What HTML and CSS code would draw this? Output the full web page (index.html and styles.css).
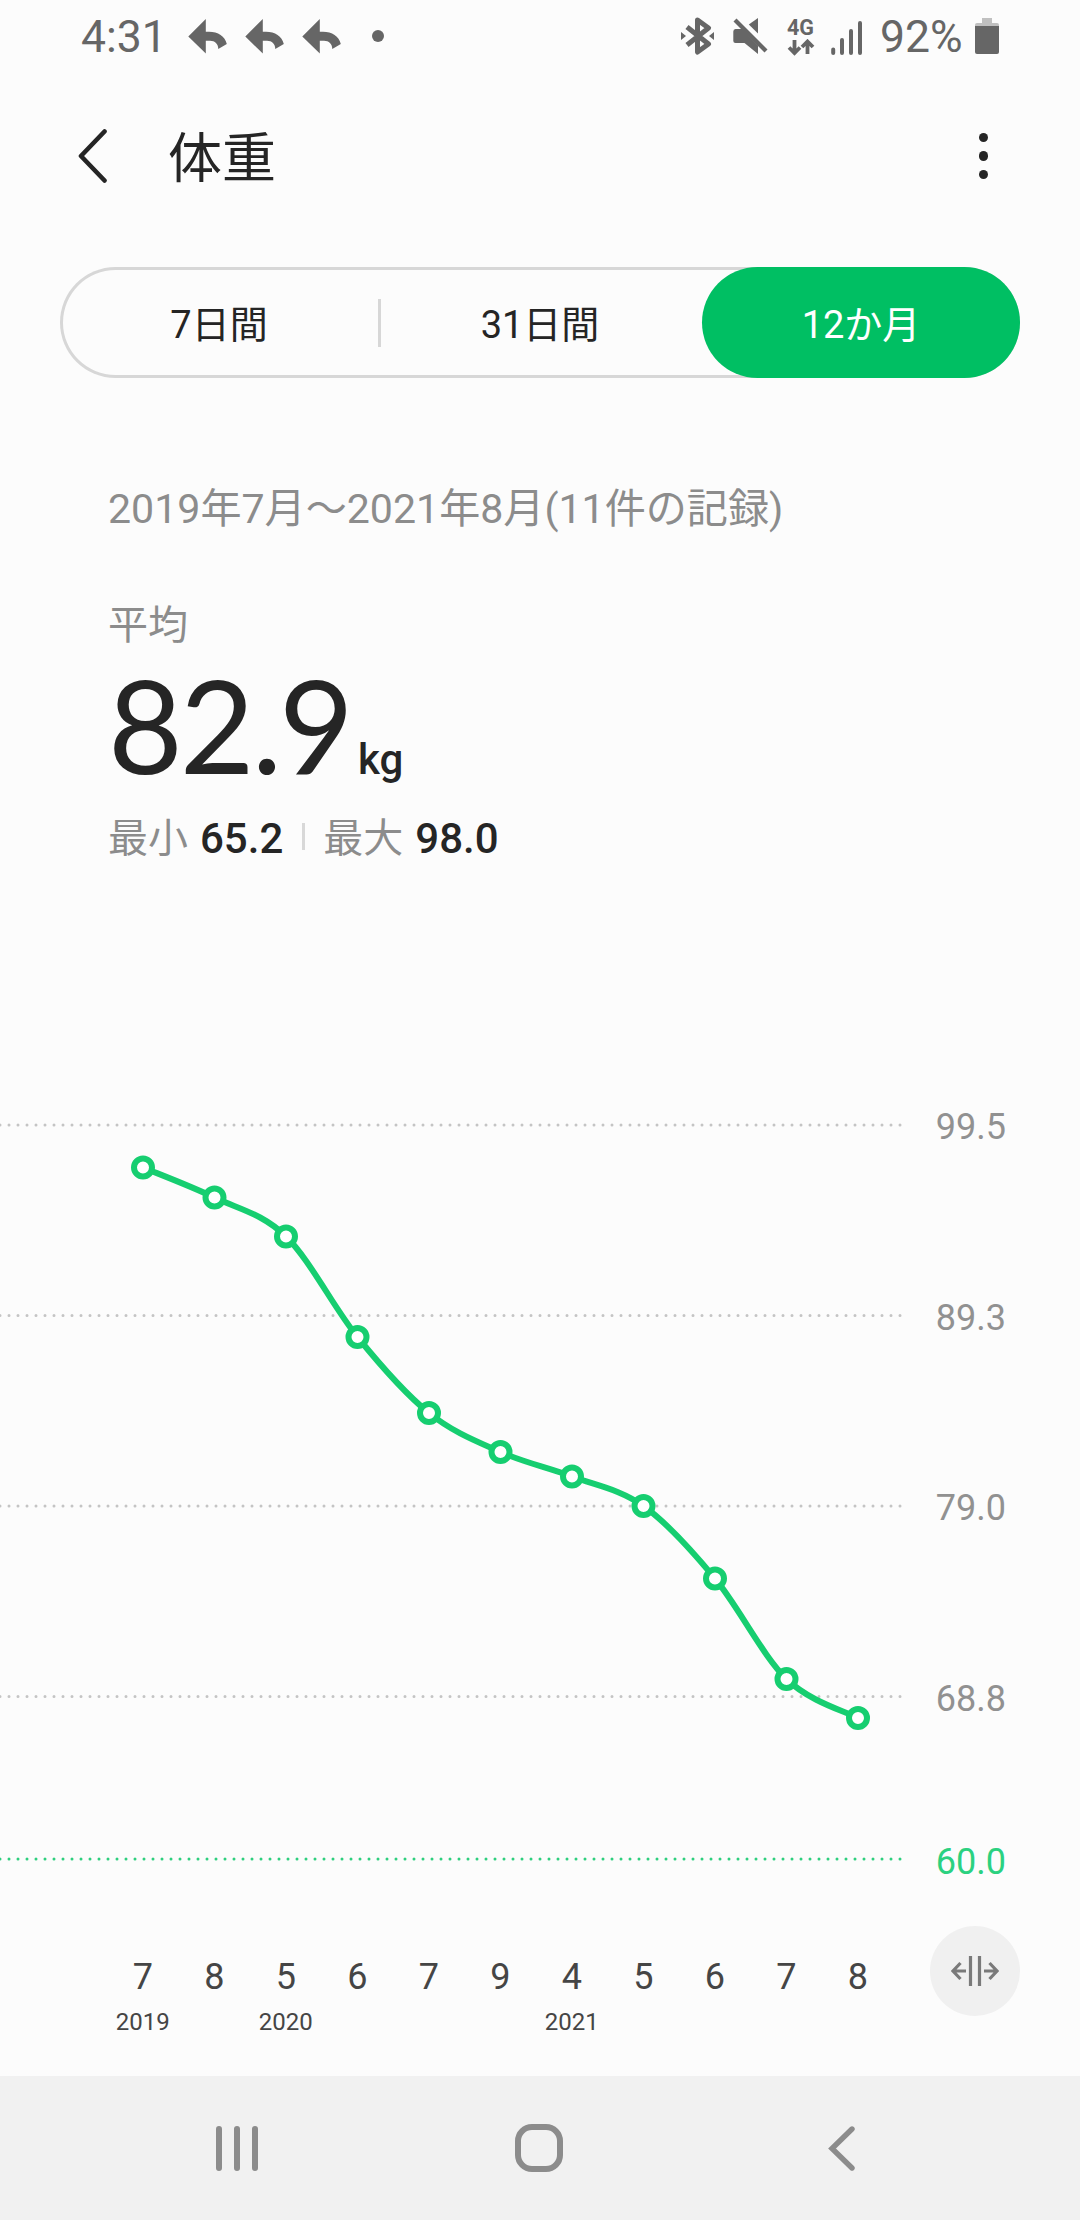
FILE: index.html
```html
<!DOCTYPE html>
<html lang="ja">
<head>
    <meta charset="UTF-8">
    <meta name="viewport" content="width=device-width, initial-scale=1.0">
    <title>体重</title>
    <link rel="stylesheet" href="styles.css">
</head>
<body>
    <div class="status-bar">
        <div class="status-left">
            <span class="clock">4:31</span>
            <svg class="reply" width="39" height="35" viewBox="0 0 39 35"><path d="M0.3 17.4 17.8 0V12.7H21C30 12.7 37 17 38.8 25L30.3 30C30.3 25 27 21.8 22 21.8H17.8V34.6Z"/></svg>
            <svg class="reply" width="39" height="35" viewBox="0 0 39 35"><path d="M0.3 17.4 17.8 0V12.7H21C30 12.7 37 17 38.8 25L30.3 30C30.3 25 27 21.8 22 21.8H17.8V34.6Z"/></svg>
            <svg class="reply" width="39" height="35" viewBox="0 0 39 35"><path d="M0.3 17.4 17.8 0V12.7H21C30 12.7 37 17 38.8 25L30.3 30C30.3 25 27 21.8 22 21.8H17.8V34.6Z"/></svg>
            <span class="more-dot"></span>
        </div>
        <div class="status-right">
            <svg class="bluetooth" width="34" height="38" viewBox="0 0 34 38">
                <path d="M6 10 27.5 27 16.5 35V3L27.5 11 6 28" fill="none" stroke="#666" stroke-width="5" stroke-linejoin="round"/>
                <path d="M0 15 5 19 0 23ZM33 15 28 19 33 23Z"/>
            </svg>
            <svg class="mute" width="35" height="36" viewBox="0 0 35 36">
                <path d="M2.5 11H9L25 27.5V36L11.5 25H2.5Q0.3 25 0.3 23V13.5Q0.3 11 2.5 11Z"/>
                <path d="M25 0V15.5L15.8 6.5Z"/>
                <path d="M2 2 33 33" stroke="#666" stroke-width="4.2"/>
            </svg>
            <div class="network">
                <span>4G</span>
                <svg width="28" height="17" viewBox="0 0 28 17"><path d="M7.5 1V14M2 8.5 7.5 14 13 8.5M20.5 15V3M15 8 20.5 2.5 26 8" fill="none" stroke="#666" stroke-width="3.8"/></svg>
            </div>
            <svg class="signal" width="32" height="34" viewBox="0 0 32 34"><path d="M2.2 28.5V32M11 19V32M20 10V32M29 2V32" stroke="#666" stroke-width="4" stroke-linecap="round"/></svg>
            <span class="percent">92%</span>
            <svg class="battery" width="24" height="36" viewBox="0 0 24 36">
                <path d="M7 0H17V5H22Q24 5 24 7V9H0V7Q0 5 2 5H7Z" fill="#c0c0c0"/>
                <path d="M0 8H24V34Q24 36 22 36H2Q0 36 0 34Z"/>
            </svg>
        </div>
    </div>

    <header class="app-bar">
        <svg class="back" width="30" height="56" viewBox="0 0 30 56"><path d="M26.5 3.5 3 28 26.5 52.5" fill="none" stroke="#252525" stroke-width="4.6" stroke-linecap="round" stroke-linejoin="round"/></svg>
        <h1>体重</h1>
        <div class="menu"><span></span><span></span><span></span></div>
    </header>

    <div class="tabs">
        <div class="tab">7日間</div>
        <div class="tab-line"></div>
        <div class="tab">31日間</div>
        <div class="tab active">12か月</div>
    </div>

    <section class="summary">
        <p class="period">2019年7月～2021年8月(11件の記録)</p>
        <p class="label">平均</p>
        <p class="average"><span class="value">82.9</span><span class="unit">kg</span></p>
        <p class="range">
            <span class="label">最小</span><b>65.2</b>
            <i class="range-line"></i>
            <span class="label">最大</span><b>98.0</b>
        </p>
    </section>

    <svg class="chart" width="1080" height="800" viewBox="0 0 1080 800">
        <g class="grid">
            <path d="M0 25H901"/>
            <path d="M0 215.4H901"/>
            <path d="M0 406H901"/>
            <path d="M0 596.5H901"/>
            <path class="goal" d="M0 759H901"/>
        </g>
        <g class="scale">
            <text x="1006" y="39">99.5</text>
            <text x="1006" y="230">89.3</text>
            <text x="1006" y="420">79.0</text>
            <text x="1006" y="611">68.8</text>
            <text class="goal" x="1006" y="774">60.0</text>
        </g>
        <path class="line" d="M143 67.5C154.9 72.5 190.7 86 214.5 97.5S262.2 113.3 286 136.5 333.7 207.6 357.5 237 405.2 293.8 429 313 476.7 341.4 500.5 352 548.2 367.5 572 376.5 619.7 389 643.5 406 691.2 449.7 715 478.5 762.7 555.8 786.5 579 846.1 611.5 858 618"/>
        <g class="points">
            <circle cx="143" cy="67.5" r="9"/>
            <circle cx="214.5" cy="97.5" r="9"/>
            <circle cx="286" cy="136.5" r="9"/>
            <circle cx="357.5" cy="237" r="9"/>
            <circle cx="429" cy="313" r="9"/>
            <circle cx="500.5" cy="352" r="9"/>
            <circle cx="572" cy="376.5" r="9"/>
            <circle cx="643.5" cy="406" r="9"/>
            <circle cx="715" cy="478.5" r="9"/>
            <circle cx="786.5" cy="579" r="9"/>
            <circle cx="858" cy="618" r="9"/>
        </g>
    </svg>

    <div class="axis">
        <div class="month">7<small>2019</small></div>
        <div class="month">8</div>
        <div class="month">5<small>2020</small></div>
        <div class="month">6</div>
        <div class="month">7</div>
        <div class="month">9</div>
        <div class="month">4<small>2021</small></div>
        <div class="month">5</div>
        <div class="month">6</div>
        <div class="month">7</div>
        <div class="month">8</div>
        <div class="spread">
            <svg width="48" height="30" viewBox="0 0 48 30"><path d="M19.5 0V30M28.5 0V30M15 15H2M9.5 7 2 15 9.5 23M33 15H46M38.5 7 46 15 38.5 23" fill="none" stroke="#7a7a7a" stroke-width="3.2"/></svg>
        </div>
    </div>

    <nav class="nav-bar">
        <svg width="42" height="45" viewBox="0 0 42 45"><path d="M3 3V42M21 3V42M39 3V42" stroke="#8c8c8c" stroke-width="6" stroke-linecap="round"/></svg>
        <svg class="home" width="48" height="48" viewBox="0 0 48 48"><rect x="3" y="3" width="42" height="42" rx="14" fill="none" stroke="#8c8c8c" stroke-width="6"/></svg>
        <svg width="27" height="45" viewBox="0 0 27 45"><path d="M24 3 4 22.5 24 42" fill="none" stroke="#8c8c8c" stroke-width="5.4" stroke-linecap="round"/></svg>
    </nav>
</body>
</html>
```
FILE: styles.css
```css
* {
    box-sizing: border-box;
}
body {
    margin: 0;
    width: 1080px;
    height: 2220px;
    display: flex;
    flex-direction: column;
    font-family: Roboto, "Noto Sans CJK JP", sans-serif;
    color: #252525;
    background-color: #fcfcfc;
}
h1, p {
    margin: 0;
    font-weight: normal;
}
svg {
    display: block;
    flex: none;
}

/* status bar */
.status-bar {
    height: 76px;
    padding: 0 81px;
    display: flex;
    justify-content: space-between;
    color: #666;
    fill: #666;
    font-size: 44.5px;
    line-height: 74px;
}
.status-left, .status-right {
    display: flex;
    align-items: center;
    height: 72px;
}
.clock {
    width: 107px;
    padding-top: 2px;
}
.reply {
    margin-right: 18px;
}
.more-dot {
    width: 12px;
    height: 12px;
    margin-left: 13px;
    border-radius: 50%;
    background-color: #666;
}
.bluetooth {
    margin-right: 18px;
}
.mute {
    margin-right: 19px;
}
.network {
    width: 28px;
    margin-right: 16px;
    font-size: 21.5px;
    font-weight: bold;
    line-height: 22px;
}
.signal {
    margin: 3px 17px 0 0;
}
.percent {
    width: 82px;
    padding-top: 2px;
    margin-right: 13px;
}

/* title row */
.app-bar {
    height: 160px;
    padding: 0 92px 0 78px;
    display: flex;
    align-items: center;
}
.app-bar h1 {
    margin-left: 60px;
    padding-top: 8px;
    font-size: 54px;
    line-height: 80px;
}
.menu {
    margin-left: auto;
    display: grid;
    gap: 9.6px;
}
.menu span {
    width: 9.2px;
    height: 9.2px;
    border-radius: 50%;
    background-color: #252525;
}

/* period tabs */
.tabs {
    width: 960px;
    height: 111px;
    margin: 31px 60px 0;
    display: flex;
    align-items: center;
    border-radius: 56px;
    box-shadow: inset 0 0 0 3px #d7d7d7;
}
.tab {
    width: 318px;
    height: 111px;
    padding-top: 3px;
    font-size: 38px;
    line-height: 111px;
    text-align: center;
}
.tab-line {
    width: 3px;
    height: 48px;
    background-color: #d7d7d7;
}
.tab.active {
    margin-left: 3px;
    border-radius: 56px;
    background-color: #00bf63;
    color: #fff;
}

/* averages */
.summary {
    height: 722px;
    padding: 106px 108px 0;
}
.period, .label {
    color: #8c8c8c;
    font-size: 40px;
    line-height: 50px;
}
.period {
    margin-bottom: 67px;
    font-size: 41.1px;
}
.average {
    height: 150px;
    margin-top: -2px;
    display: flex;
    align-items: baseline;
    line-height: 150px;
}
.value {
    font-family: Lato, sans-serif;
    font-size: 129px;
    letter-spacing: -3px;
}
.unit {
    margin-left: 7px;
    font-size: 42px;
    font-weight: 500;
}
.range {
    margin-top: 14px;
    display: flex;
    align-items: center;
    line-height: 50px;
}
.range .label {
    padding-top: 1px;
}
.range b {
    margin-left: 12px;
    font-size: 42px;
    font-weight: 500;
}
.range-line {
    width: 3px;
    height: 27px;
    margin: 0 18px 5px 19px;
    background-color: #d8d8d8;
}

/* chart */
.grid path {
    stroke: #c4c4c4;
    stroke-width: 3;
    stroke-linecap: round;
    stroke-dasharray: 0 9;
}
.grid .goal {
    stroke: #2ecf7e;
}
.scale text {
    fill: #919191;
    font-size: 36px;
    text-anchor: end;
}
.scale .goal {
    fill: #2bd180;
}
.line {
    fill: none;
    stroke: #16ce70;
    stroke-width: 6;
}
.points circle {
    fill: #fff;
    stroke: #16ce70;
    stroke-width: 6;
}

/* months under the chart */
.axis {
    height: 176px;
    padding: 26px 60px 0 107px;
    display: flex;
}
.month {
    width: 71.5px;
    padding-top: 27px;
    display: flex;
    flex-direction: column;
    align-items: center;
    font-size: 36px;
    line-height: 48px;
    color: #454545;
}
.month small {
    font-size: 24px;
    line-height: 43px;
}
.spread {
    width: 90px;
    height: 90px;
    margin-left: auto;
    display: flex;
    align-items: center;
    justify-content: center;
    border-radius: 50%;
    background-color: #f0f0f0;
}

/* system navigation */
.nav-bar {
    height: 144px;
    padding-left: 216px;
    display: flex;
    align-items: center;
    background-color: #f1f1f1;
}
.home {
    margin: 0 265px 0 257px;
}
```
